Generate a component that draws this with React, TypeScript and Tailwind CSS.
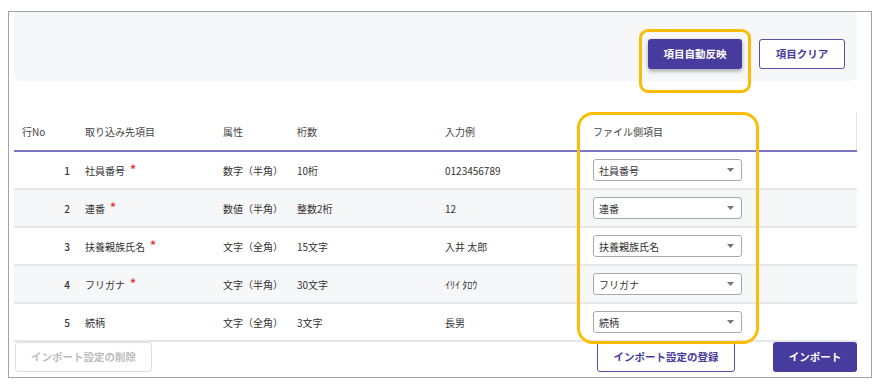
import React from "react";

type Row = {
  no: number;
  name: string;
  required: boolean;
  attr: string;
  digits: string;
  sample: string;
  file: string;
};

const ROWS: Row[] = [
  { no: 1, name: "社員番号", required: true, attr: "数字（半角）", digits: "10桁", sample: "0123456789", file: "社員番号" },
  { no: 2, name: "連番", required: true, attr: "数値（半角）", digits: "整数2桁", sample: "12", file: "連番" },
  { no: 3, name: "扶養親族氏名", required: true, attr: "文字（全角）", digits: "15文字", sample: "入井 太郎", file: "扶養親族氏名" },
  { no: 4, name: "フリガナ", required: true, attr: "文字（半角）", digits: "30文字", sample: "ｲﾘｲ ﾀﾛｳ", file: "フリガナ" },
  { no: 5, name: "続柄", required: false, attr: "文字（全角）", digits: "3文字", sample: "長男", file: "続柄" },
];

function SelectBox({ value }: { value: string }) {
  return (
    <div className="flex h-[22px] w-[149px] items-center justify-between rounded-[3px] border border-[#a9a9a9] bg-white pl-[5px] pr-[7px] text-[10px] text-[#333]">
      <span>{value}</span>
      <svg width="7" height="4" viewBox="0 0 7 4">
        <path d="M0 0 L7 0 L3.5 4 Z" fill="#777" />
      </svg>
    </div>
  );
}

export default function App() {
  return (
    <div className="h-[384px] w-[882px] bg-white pl-[8px] pt-[11px] font-['Noto_Sans_CJK_JP',sans-serif]">
      <div className="flex h-[367px] w-[864px] flex-col border border-[#a3a3a3] px-[5px]">
        {/* top action panel */}
        <div className="flex h-[69px] w-[843px] justify-end gap-[17px] rounded-b-md bg-[#f6f7f9] pr-[12px] pt-[27px]">
          <div className="relative">
            <div className="absolute -bottom-[12px] -left-[9px] -right-[9px] -top-[10px] rounded-[9px] border-[3px] border-[#fbbc05]" />
            <button
              type="button"
              className="relative h-[30px] w-[94px] rounded-[3px] bg-[#473c9e] text-[10.5px] font-bold text-white shadow-[0_2px_4px_rgba(0,0,0,0.35)]"
            >
              項目自動反映
            </button>
          </div>
          <button
            type="button"
            className="h-[30px] w-[86px] rounded-[3px] border border-[#5a4fa8] bg-white text-[10.5px] font-bold text-[#473c9e]"
          >
            項目クリア
          </button>
        </div>

        {/* table */}
        <div className="relative mt-[31px] w-[843px] text-[10px] text-[#333]">
          <div className="absolute left-[563px] top-0 h-[232px] w-[182px] rounded-[16px] border-[3px] border-[#fbbc05]" />
          <div className="flex h-[40px] items-center border-b-2 border-[#7c77c3] text-[#444]">
            <div className="w-[64px] pl-[8px]">行No</div>
            <div className="w-[138px] pl-[7px]">取り込み先項目</div>
            <div className="w-[74px] pl-[7px]">属性</div>
            <div className="w-[148px] pl-[7px]">桁数</div>
            <div className="w-[148px] pl-[7px]">入力例</div>
            <div className="flex-1 pl-[7px]">ファイル側項目</div>
            <div className="h-[38px] w-px self-end bg-[#e4e4e4]" />
          </div>
          {ROWS.map((row) => (
            <div
              key={row.no}
              className={`flex h-[38px] items-center border-b-2 border-[#e6e6e6] ${
                row.no % 2 === 0 ? "bg-[#f6f7f9]" : "bg-white"
              }`}
            >
              <div className="w-[64px] pr-[8px] text-right font-medium">{row.no}</div>
              <div className="w-[138px] pl-[7px]">
                {row.name}
                {row.required && (
                  <span className="relative -top-[1px] ml-[5px] text-[12px] font-bold text-[#e53935]">*</span>
                )}
              </div>
              <div className="w-[74px] pl-[7px]">{row.attr}</div>
              <div className="w-[148px] pl-[7px]">{row.digits}</div>
              <div className="w-[148px] pl-[7px]">{row.sample}</div>
              <div className="flex-1 pl-[7px]">
                <SelectBox value={row.file} />
              </div>
            </div>
          ))}
        </div>

        {/* bottom actions */}
        <div className="flex w-[843px] items-center pl-px">
          <button
            type="button"
            disabled
            className="h-[30px] w-[137px] rounded-[3px] border border-[#dedede] bg-white text-[10.5px] font-bold text-[#bdbdbd]"
          >
            インポート設定の削除
          </button>
          <div className="flex-1" />
          <button
            type="button"
            className="h-[30px] w-[138px] rounded-[3px] border border-[#5a4fa8] bg-white text-[10.5px] font-bold text-[#473c9e]"
          >
            インポート設定の登録
          </button>
          <button
            type="button"
            className="ml-[38px] h-[30px] w-[84px] rounded-[3px] bg-[#473c9e] text-[10.5px] font-bold text-white"
          >
            インポート
          </button>
        </div>
      </div>
    </div>
  );
}
